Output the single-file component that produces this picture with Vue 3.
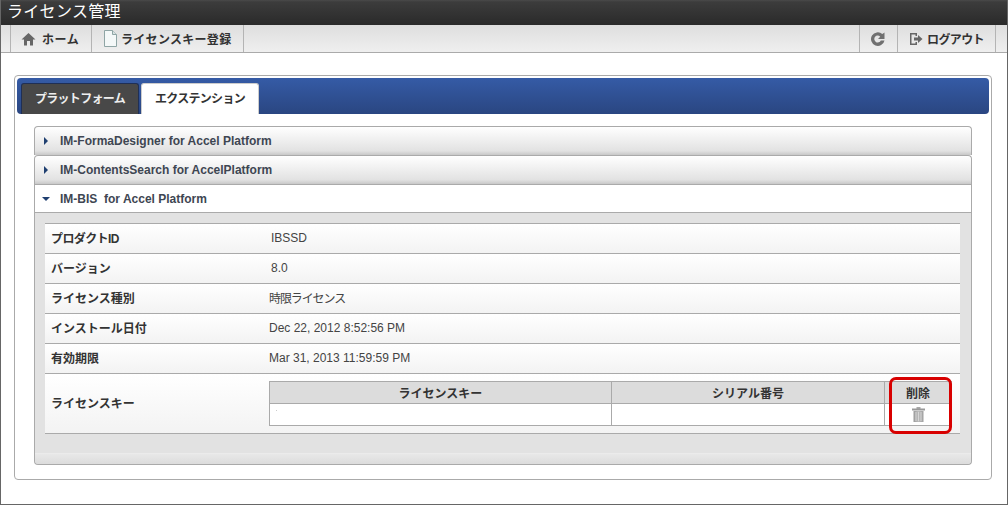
<script setup>
const accordions = [
  { name: 'IM-FormaDesigner for Accel Platform' },
  { name: 'IM-ContentsSearch for AccelPlatform' }
]
const rows = [
  { label: 'プロダクトID', value: 'IBSSD', inset: true, tight: true },
  { label: 'バージョン', value: '8.0', inset: true },
  { label: 'ライセンス種別', value: '時限ライセンス', jp: true },
  { label: 'インストール日付', value: 'Dec 22, 2012 8:52:56 PM' },
  { label: '有効期限', value: 'Mar 31, 2013 11:59:59 PM' }
]
</script>

<template>
  <div class="frame">
    <header class="title">ライセンス管理</header>
    <nav class="toolbar">
      <div class="group">
        <a class="tool home">
          <svg width="15" height="14" viewBox="0 0 15 14"><path d="M7.5 1 L14.5 7.5 H12 V13.5 H9 V9 H6 V13.5 H3 V7.5 H.5 Z" fill="#666"/></svg>
          <span>ホーム</span>
        </a>
        <a class="tool reg">
          <svg width="13" height="17" viewBox="0 0 13 17"><path d="M.5.5 H8.5 L12.5 4.5 V16.5 H.5 Z" fill="#f4f8f8" stroke="#8fa5a5"/><path d="M8.5.5 V4.5 H12.5" fill="#d8e2e2" stroke="#8fa5a5"/></svg>
          <span>ライセンスキー登録</span>
        </a>
      </div>
      <div class="group">
        <a class="tool refresh">
          <svg width="14" height="14" viewBox="0 0 14 14"><path d="M13.5 8.4 A6.8 6.8 0 1 1 11.3 2 L13.5 0.5 V7 H7 L9.2 4.7 A3.4 3.4 0 1 0 9.8 8.4 Z" fill="#707070"/></svg>
        </a>
        <a class="tool logout">
          <svg width="14" height="14" viewBox="0 0 14 14"><path d="M1 1 H8 V4 H6.5 V2.5 H2.5 V11.5 H6.5 V10 H8 V13 H1 Z" fill="#666"/><path d="M5 5.5 H9 V3 L13.5 7 L9 11 V8.5 H5 Z" fill="#666"/></svg>
          <span>ログアウト</span>
        </a>
      </div>
    </nav>

    <main class="main">
      <section class="panel">
        <div class="tabs">
          <div class="tab dark">プラットフォーム</div>
          <div class="tab light">エクステンション</div>
        </div>
        <div class="body">
          <div class="accordion">
            <div v-for="a in accordions" :key="a.name" class="acc-head">
              <i class="arrow right"></i>{{ a.name }}
            </div>
            <div class="acc-head open"><i class="arrow down"></i>IM-BIS&nbsp; for Accel Platform</div>
            <div class="acc-body">
              <div class="grid">
                <div v-for="r in rows" :key="r.label" class="row">
                  <div class="label" :class="{ tight: r.tight }">{{ r.label }}</div>
                  <div class="value" :class="{ inset: r.inset, jp: r.jp }">{{ r.value }}</div>
                </div>
                <div class="row key">
                  <div class="label">ライセンスキー</div>
                  <table class="keys">
                    <thead>
                      <tr><th class="c1">ライセンスキー</th><th class="c2">シリアル番号</th><th class="c3">削除</th></tr>
                    </thead>
                    <tbody>
                      <tr>
                        <td class="first"><i class="speck"></i></td><td></td>
                        <td class="trash">
                          <svg width="13" height="15" viewBox="0 0 13 15">
                            <defs>
                              <linearGradient id="can" x1="0" x2="1" y1="0" y2="0">
                                <stop offset="0" stop-color="#9a9a9a"/>
                                <stop offset="0.5" stop-color="#bcbcbc"/>
                                <stop offset="1" stop-color="#a0a0a0"/>
                              </linearGradient>
                            </defs>
                            <rect x="4.5" y="0" width="4" height="2" fill="#a8a8a8"/>
                            <rect x="0" y="1.5" width="13" height="2" fill="#999"/>
                            <path d="M1.5 4 H11.5 V15 H1.5 Z" fill="url(#can)"/>
                            <path d="M4 5 V14 M6.5 5 V14 M9 5 V14" stroke="#d6d6d6" stroke-width="1"/>
                          </svg>
                        </td>
                      </tr>
                    </tbody>
                  </table>
                  <div class="highlight"></div>
                </div>
              </div>
              <div class="acc-foot"></div>
            </div>
          </div>
        </div>
      </section>
    </main>
  </div>
</template>

<style>
html, body { margin: 0; padding: 0; background: #fff; }
</style>

<style scoped>
.frame {
  width: 1008px; height: 505px; box-sizing: border-box;
  border: 1px solid #666; border-top: 0; background: #fff;
  font-family: "Liberation Sans", "Noto Sans CJK JP", sans-serif;
  font-size: 12px; color: #333; overflow: hidden;
}
.title {
  height: 25px; margin-right: -1px; box-sizing: border-box;
  background: linear-gradient(#4a4a4a 0, #3c3c3c 2px, #2a2a2a 100%);
  color: #fff; font-size: 16px; line-height: 23px; padding-left: 6px; letter-spacing: .3px;
}
.toolbar {
  height: 28px; box-sizing: border-box; display: flex; justify-content: space-between;
  padding: 0 11px 0 9px; border-bottom: 1px solid #aaa;
  background: linear-gradient(#dedede, #efefef);
}
.group { display: flex; }
.tool {
  display: flex; align-items: center; height: 27px; box-sizing: border-box;
  border-left: 1px solid #b4b4b4; font-weight: bold; font-size: 12px; color: #333;
}
.group:last-child .tool:last-child, .group:first-child .tool:last-child { border-right: 1px solid #b4b4b4; }
.home { width: 81px; padding-left: 10px; gap: 6px; }
.home span { letter-spacing: .6px; }
.reg { width: 153px; padding-left: 12px; gap: 4px; }
.reg span { letter-spacing: .3px; }
.refresh { width: 38px; justify-content: center; padding-right: 1px; }
.logout { width: 99px; padding-left: 11px; gap: 4px; }
.logout span { letter-spacing: -.6px; }

.main { padding: 22px 15px 0 13px; }
.panel {
  height: 405px; box-sizing: border-box; padding: 2px;
  border: 1px solid #aaa; border-radius: 4px; background: #fff;
}
.tabs {
  height: 36px; box-sizing: border-box; padding: 5px 0 0 4px;
  display: flex; gap: 2px; border-radius: 4px;
  background: linear-gradient(#355ba6, #2a4681);
}
.tab {
  width: 118px; height: 31px; box-sizing: border-box; text-align: center;
  font-weight: bold; font-size: 12px; line-height: 31px; border-radius: 3px 3px 0 0;
  letter-spacing: -.7px;
}
.tab.dark { background: #484848; color: #eee; border: 1px solid #1f2f55; border-bottom: 0; }
.tab.light { background: #fff; color: #333; border: 1px solid #ccc; border-bottom: 0; }
.body { padding: 12px 17px 0; }
.accordion { width: 938px; }
.acc-head {
  height: 29px; box-sizing: border-box; display: flex; align-items: center;
  padding-left: 25px; position: relative;
  border: 1px solid #aaa; border-bottom: 0; border-radius: 4px 4px 0 0;
  background: linear-gradient(#fff, #e2e2e2 85%, #c8c8c8); font-weight: bold; color: #3e4652;
}
.acc-head.open {
  height: 29px; background: #fff; border-radius: 0; border-bottom: 1px solid #aaa;
}
.arrow { position: absolute; left: 9px; width: 0; height: 0; }
.arrow.right { top: 10px; border-left: 4px solid #1f3f70; border-top: 4px solid transparent; border-bottom: 4px solid transparent; }
.arrow.down { top: 12px; left: 7px; border-top: 4px solid #1f3f70; border-left: 4px solid transparent; border-right: 4px solid transparent; }
.acc-body {
  height: 252px; box-sizing: border-box; padding-top: 10px;
  display: flex; flex-direction: column;
  border: 1px solid #aaa; border-top: 0; border-radius: 0 0 4px 4px; background: #e2e2e2;
}
.grid { margin: 0 11px 0 10px; border-top: 1px solid #aaa; }
.row {
  display: flex; align-items: center; height: 30px; box-sizing: border-box;
  border-bottom: 1px solid #aaa; background: linear-gradient(#fff, #f3f3f3);
}
.label { width: 224px; box-sizing: border-box; padding: 0 0 2px 6px; font-weight: bold; color: #333; }
.label.tight { letter-spacing: -.6px; }
.value { color: #444; padding-bottom: 2px; }
.value.inset { padding-left: 2px; }
.value.jp { letter-spacing: -1.1px; }
.row.key { height: 60px; position: relative; }
.keys {
  width: 683px; height: 44px; border-collapse: collapse; table-layout: fixed;
  background: #fff; font-size: 12px;
}
.keys th, .keys td { border: 1px solid #aaa; padding: 0; height: 22px; box-sizing: border-box; }
.keys th { background: #dcdcdc; font-weight: bold; color: #333; }
.c1 { width: 342px; }
.c2 { width: 273px; }
.first { vertical-align: top; }
.speck { display: block; width: 1px; height: 1px; margin: 6px 0 0 6px; background: #ccc; }
.trash { text-align: center; vertical-align: top; }
.trash svg { display: block; margin: 3px auto 0; }
.highlight {
  position: absolute; left: 844px; top: 3px; width: 63px; height: 57px; box-sizing: border-box;
  border: 3px solid #d80000; border-radius: 7px;
}
.acc-foot { margin-top: auto; height: 10px; border-top: 1px solid #ebebeb; background: linear-gradient(#e8e8e8, #dcdcdc); border-radius: 0 0 4px 4px; }
</style>
